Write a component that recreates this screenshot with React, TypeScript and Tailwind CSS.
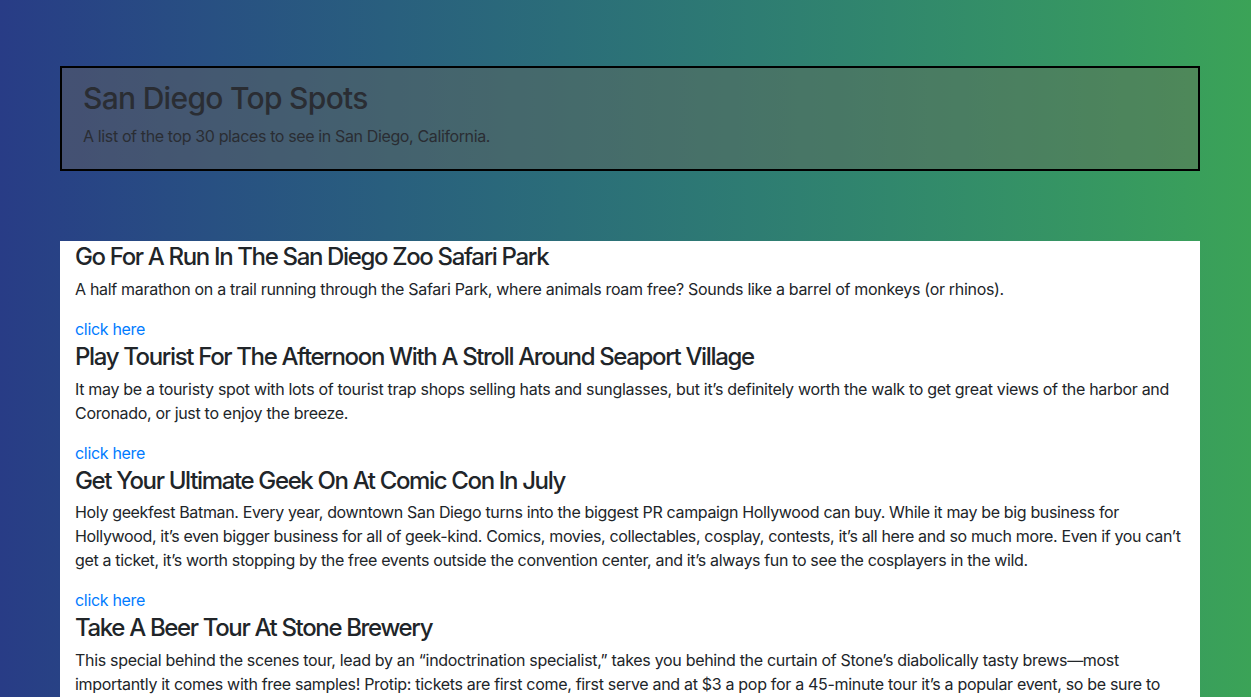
const spots = [
  {
    title: 'Go For A Run In The San Diego Zoo Safari Park',
    text: 'A half marathon on a trail running through the Safari Park, where animals roam free? Sounds like a barrel of monkeys (or rhinos).',
    tight: false,
  },
  {
    title: 'Play Tourist For The Afternoon With A Stroll Around Seaport Village',
    text: 'It may be a touristy spot with lots of tourist trap shops selling hats and sunglasses, but it’s definitely worth the walk to get great views of the harbor and Coronado, or just to enjoy the breeze.',
    tight: false,
  },
  {
    title: 'Get Your Ultimate Geek On At Comic Con In July',
    text: 'Holy geekfest Batman. Every year, downtown San Diego turns into the biggest PR campaign Hollywood can buy. While it may be big business for Hollywood, it’s even bigger business for all of geek-kind. Comics, movies, collectables, cosplay, contests, it’s all here and so much more. Even if you can’t get a ticket, it’s worth stopping by the free events outside the convention center, and it’s always fun to see the cosplayers in the wild.',
    tight: true,
  },
  {
    title: 'Take A Beer Tour At Stone Brewery',
    text: 'This special behind the scenes tour, lead by an “indoctrination specialist,” takes you behind the curtain of Stone’s diabolically tasty brews—most importantly it comes with free samples! Protip: tickets are first come, first serve and at $3 a pop for a 45-minute tour it’s a popular event, so be sure to get there early.',
    tight: false,
  },
  {
    title: 'Watch The Sunset At Sunset Cliffs',
    text: 'The name says it all. Grab a blanket, some snacks and a few friends and catch one of the best sunsets in Southern California.',
    tight: false,
  },
]

export default function App() {
  return (
    <div className="min-h-screen bg-gradient-to-r from-[#283c86] to-[#3ba357] pt-[66px] pb-10 font-['Inter','Liberation_Sans',sans-serif] text-[#212529]">
      <div className="ml-[60px] w-[1140px]">
        {/* Header */}
        <div className="border-2 border-black bg-[rgba(110,102,88,0.4)] px-[21px] pt-3 pb-[21px] text-[#2a2d33]">
          <h1 className="mb-2 text-[30px] leading-[1.2] font-medium tracking-[-0.7px]">San Diego Top Spots</h1>
          <p className="text-base leading-6 tracking-[-0.37px]">A list of the top 30 places to see in San Diego, California.</p>
        </div>

        {/* List */}
        <div className="mt-[70px] bg-white px-[15px] pb-4">
          {spots.map((s, i) => (
            <div key={i}>
              <h3 className="mb-[5px] pt-[2px] text-2xl leading-[1.2] font-medium tracking-[-1.35px]">{s.title}</h3>
              <p className={s.tight ? 'mb-4 text-base leading-6 tracking-[-0.35px]' : 'mb-4 text-base leading-6 tracking-[-0.31px]'}>
                {s.text}
              </p>
              <a href="#" className="text-base leading-6 tracking-[-0.31px] text-[#007bff]">click here</a>
            </div>
          ))}
        </div>
      </div>
    </div>
  )
}
